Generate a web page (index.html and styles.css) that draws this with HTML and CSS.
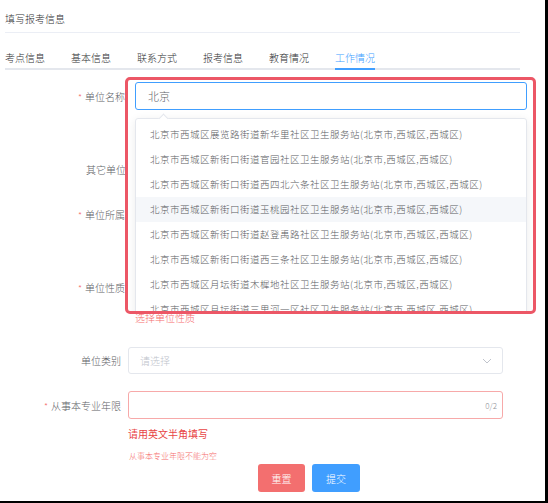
FILE: index.html
```html
<!DOCTYPE html>
<html lang="zh-CN">
<head>
    <meta charset="UTF-8">
    <meta name="viewport" content="width=device-width, initial-scale=1.0">
    <title>填写报考信息</title>
    <link rel="stylesheet" href="styles.css">
</head>
<body>
    <div class="page">
        <div class="title">填写报考信息</div>
        <div class="tabs">
            <span class="tab">考点信息</span>
            <span class="tab">基本信息</span>
            <span class="tab">联系方式</span>
            <span class="tab">报考信息</span>
            <span class="tab">教育情况</span>
            <span class="tab active">工作情况</span>
        </div>

        <div class="form">
            <div class="form-item row-1">
                <label class="label label-left"><i class="req">*</i>单位名称</label>
            </div>
            <div class="form-item row-2">
                <label class="label label-left no-req">其它单位名称</label>
            </div>
            <div class="form-item row-3">
                <label class="label label-left"><i class="req">*</i>单位所属地区</label>
            </div>
            <div class="form-item row-4">
                <label class="label label-left"><i class="req">*</i>单位性质</label>
            </div>
            <div class="error-top">选择单位性质</div>

            <div class="form-item row-5">
                <label class="label">单位类别</label>
                <div class="control select">
                    <span class="placeholder">请选择</span>
                    <svg class="chevron" width="10" height="6" viewBox="0 0 10 6">
                        <path d="M1 1 L5 5 L9 1" fill="none" stroke="#c0c4cc" stroke-width="1"/>
                    </svg>
                </div>
            </div>
            <div class="form-item row-6">
                <label class="label"><i class="req">*</i>从事本专业年限</label>
                <div class="control input-error">
                    <span class="count">0/2</span>
                </div>
            </div>
            <div class="hint">请用英文半角填写</div>
            <div class="error-msg">从事本专业年限不能为空</div>

            <div class="actions">
                <button class="btn btn-reset">重置</button>
                <button class="btn btn-submit">提交</button>
            </div>
        </div>

        <!-- highlighted autocomplete -->
        <div class="highlight">
            <div class="hl-input">北京</div>
            <div class="suggest">
                <span class="arrow"></span>
                <ul>
                    <li>北京市西城区展览路街道新华里社区卫生服务站(北京市,西城区,西城区)</li>
                    <li>北京市西城区新街口街道官园社区卫生服务站(北京市,西城区,西城区)</li>
                    <li>北京市西城区新街口街道西四北六条社区卫生服务站(北京市,西城区,西城区)</li>
                    <li class="hover">北京市西城区新街口街道玉桃园社区卫生服务站(北京市,西城区,西城区)</li>
                    <li>北京市西城区新街口街道赵登禹路社区卫生服务站(北京市,西城区,西城区)</li>
                    <li>北京市西城区新街口街道西三条社区卫生服务站(北京市,西城区,西城区)</li>
                    <li>北京市西城区月坛街道木樨地社区卫生服务站(北京市,西城区,西城区)</li>
                    <li>北京市西城区月坛街道三里河一区社区卫生服务站(北京市,西城区,西城区)</li>
                </ul>
            </div>
        </div>
    </div>
</body>
</html>
```

FILE: styles.css
```css
* {
    margin: 0;
    padding: 0;
    box-sizing: border-box;
    font-family: "Noto Sans CJK SC", "Noto Sans", sans-serif;
    font-weight: 300;
}
body {
    background: #000;
    width: 548px;
    height: 503px;
    overflow: hidden;
}
.page {
    position: relative;
    width: 545px;
    height: 501px;
    background: #fff;
    overflow: hidden;
}
.title {
    margin-left: 5px;
    width: 515px;
    height: 33px;
    padding-top: 6px;
    line-height: 26px;
    font-size: 10px;
    color: #303133;
    border-bottom: 1px solid #ebeef5;
}
.tabs {
    display: flex;
    gap: 26px;
    margin-left: 5px;
    width: 515px;
    padding-top: 14px;
    border-bottom: 2px solid #e4e7ed;
}
.tab {
    width: 40px;
    line-height: 21px;
    font-size: 10px;
    color: #303133;
    white-space: nowrap;
    border-bottom: 2px solid transparent;
    margin-bottom: -2px;
}
.tab.active {
    color: #409eff;
    border-bottom-color: #409eff;
}
.form {
    margin-top: 12px;
}
.form-item {
    display: flex;
    align-items: center;
    height: 28px;
}
.row-2 { margin-top: 45px; }
.row-3 { margin-top: 17px; }
.row-4 { margin-top: 45px; }
.row-5 { margin-top: 22px; height: 27px; }
.row-6 { margin-top: 17px; }
.label {
    width: 121px;
    text-align: right;
    font-size: 10px;
    color: #606266;
    white-space: nowrap;
}
.label-left {
    text-align: left;
    padding-left: 78px;
    width: auto;
}
.label-left.no-req {
    padding-left: 86px;
}
.req {
    font-style: normal;
    color: #f56c6c;
    font-size: 9px;
    margin-right: 3px;
}
.error-top {
    margin-left: 135px;
    margin-top: 10px;
    line-height: 14px;
    font-size: 10px;
    color: #f56c6c;
}
.control {
    position: relative;
    display: flex;
    align-items: center;
    margin-left: 7px;
    width: 375px;
    height: 100%;
    border: 1px solid #dcdfe6;
    border-radius: 3px;
    padding: 0 11px;
}
.select {
    border-color: #e4e7ed;
    justify-content: space-between;
}
.placeholder {
    font-size: 10px;
    color: #c0c4cc;
}
.chevron {
    margin-right: -1px;
}
.input-error {
    border-color: #f7a9a9;
    justify-content: flex-end;
}
.count {
    font-size: 8px;
    color: #909399;
    margin-right: -6px;
}
.hint {
    margin: 7px 0 0 128px;
    line-height: 16px;
    font-size: 10px;
    font-weight: 400;
    color: #e84545;
}
.error-msg {
    margin: 8px 0 0 129px;
    line-height: 12px;
    font-size: 8px;
    color: #f56c6c;
}
.actions {
    display: flex;
    gap: 7px;
    margin-top: 2px;
    padding-left: 258px;
}
.btn {
    height: 28px;
    border: none;
    border-radius: 3px;
    font-size: 10px;
    color: #fff;
}
.btn-reset {
    width: 47px;
    background: #f36f6f;
}
.btn-submit {
    width: 48px;
    background: #409eff;
}
.highlight {
    position: absolute;
    left: 125px;
    top: 77px;
    width: 411px;
    height: 237px;
    border: 3px solid #ec5766;
    border-radius: 5px;
    background: #fff;
    overflow: hidden;
    padding: 2px 6px 0 7px;
}
.hl-input {
    height: 28px;
    line-height: 26px;
    border: 1px solid #409eff;
    border-radius: 3px;
    padding-left: 12px;
    font-size: 11px;
    color: #606266;
}
.suggest {
    position: relative;
    margin-top: 8px;
    border: 1px solid #e4e7ed;
    border-radius: 3px;
    box-shadow: 0 2px 10px rgba(0, 0, 0, 0.08);
    background: #fff;
    padding-top: 3px;
}
.arrow {
    position: absolute;
    left: 24px;
    top: -4px;
    width: 7px;
    height: 7px;
    background: #fff;
    border-left: 1px solid #e4e7ed;
    border-top: 1px solid #e4e7ed;
    transform: rotate(45deg);
}
.suggest ul {
    list-style: none;
}
.suggest li {
    height: 25px;
    line-height: 25px;
    padding-left: 14px;
    font-size: 9.5px;
    letter-spacing: 0.5px;
    color: #5a5c61;
    white-space: nowrap;
}
.suggest li.hover {
    background: #f5f7fa;
}
```
